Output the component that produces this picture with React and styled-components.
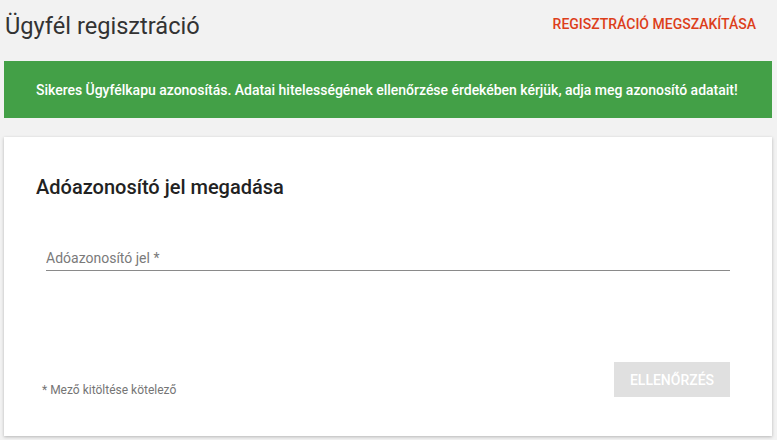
import React from 'react';
import styled, { createGlobalStyle } from 'styled-components';

const GlobalStyle = createGlobalStyle`
  body {
    margin: 0;
    background: #f2f2f2;
    font-family: Roboto, "Liberation Sans", Arial, sans-serif;
  }
`;

const Page = styled.div`
  padding: 0 5px 4px 4px;
`;

const Header = styled.div`
  height: 61px;
  display: flex;
  align-items: center;
  justify-content: space-between;
`;

const Title = styled.h1`
  margin: 0 0 9px 1px;
  font-size: 23.6px;
  font-weight: 400;
  color: #333;
`;

const CancelLink = styled.a`
  margin-right: 16px;
  margin-bottom: 14px;
  font-size: 14px;
  font-weight: 500;
  color: #dd3e1a;
  text-transform: uppercase;
  cursor: pointer;
`;

const Banner = styled.div`
  height: 57px;
  display: flex;
  align-items: center;
  padding-left: 32px;
  background: #43a047;
  color: #fff;
  font-size: 14px;
  letter-spacing: -0.02px;
  font-weight: 500;
`;

const Card = styled.div`
  margin-top: 19px;
  height: 299px;
  background: #fff;
  box-shadow: 0 1px 3px rgba(0, 0, 0, 0.25);
  padding: 38px 32px 0;
  box-sizing: border-box;
  display: flex;
  flex-direction: column;
`;

const CardTitle = styled.h2`
  margin: 0;
  font-size: 20px;
  font-weight: 500;
  color: #222;
`;

const Field = styled.div`
  margin: 49px 10px 0;
  border-bottom: 1px solid #8a8a8a;
  padding-bottom: 3px;
`;

const FieldInput = styled.input`
  width: 100%;
  border: none;
  outline: none;
  padding: 0;
  font-family: inherit;
  font-size: 14px;
  color: #333;
  background: transparent;

  &::placeholder {
    color: #7a7a7a;
  }
`;

const Footer = styled.div`
  margin: 91px 10px 0 6px;
  display: flex;
  align-items: center;
  justify-content: space-between;
`;

const Note = styled.span`
  margin-top: 20px;
  font-size: 12px;
  color: #757575;
`;

const Button = styled.button`
  width: 116px;
  height: 35px;
  border: none;
  background: #e0e0e0;
  color: #fff;
  font-family: inherit;
  font-size: 14px;
  font-weight: 500;
  text-transform: uppercase;
`;

export default function App() {
  return (
    <>
      <GlobalStyle />
      <Page>
        <Header>
          <Title>Ügyfél regisztráció</Title>
          <CancelLink>Regisztráció megszakítása</CancelLink>
        </Header>
        <Banner>
          Sikeres Ügyfélkapu azonosítás. Adatai hitelességének ellenőrzése érdekében kérjük, adja meg azonosító adatait!
        </Banner>
        <Card>
          <CardTitle>Adóazonosító jel megadása</CardTitle>
          <Field>
            <FieldInput placeholder="Adóazonosító jel *" />
          </Field>
          <Footer>
            <Note>* Mező kitöltése kötelező</Note>
            <Button disabled>Ellenőrzés</Button>
          </Footer>
        </Card>
      </Page>
    </>
  );
}
